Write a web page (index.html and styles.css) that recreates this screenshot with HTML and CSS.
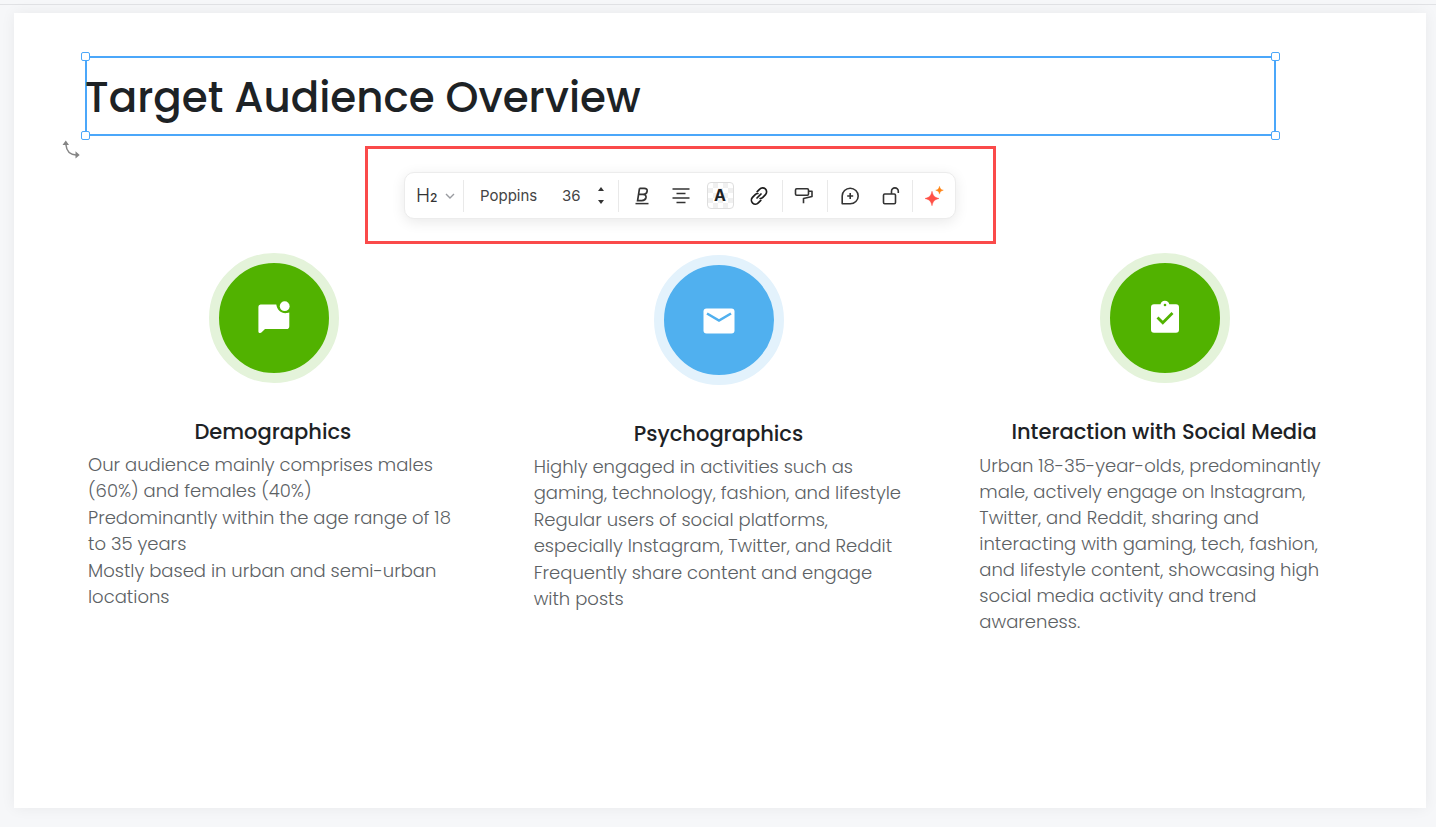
FILE: index.html
```html
<!DOCTYPE html>
<html lang="en">
<head>
<meta charset="utf-8">
<title>Target Audience Overview</title>
<link rel="stylesheet" href="styles.css">
</head>
<body>
<div class="topbar"></div>
<main class="slide">
  <section class="heading-area">
    <div class="selection">
      <h1 class="title">Target Audience Overview</h1>
      <span class="handle top-left"></span>
      <span class="handle top-right"></span>
      <span class="handle bottom-left"></span>
      <span class="handle bottom-right"></span>
      <svg class="rotate" width="20" height="20" viewBox="0 0 20 20" aria-hidden="true"><path d="M5 5C5.500 11 9 14.500 15 15" fill="none" stroke="#858585" stroke-width="1.500"/><path d="M1.500 5 4.800.5 8 5Z M14.500 11.300 18.700 15 14.500 18.500Z" fill="#858585"/></svg>
    </div>
    <div class="callout">
      <div class="toolbar" role="toolbar" aria-label="Text formatting">
        <div class="group g-style">
          <button class="style-btn" aria-label="Heading 2"><span>H<span class="level">2</span></span>
            <svg width="10" height="6" viewBox="0 0 10 6"><path d="M1 1l4 4 4-4" fill="none" stroke="#999ba0" stroke-width="1.400"/></svg></button>
        </div>
        <div class="group g-font">
          <select class="font-select" aria-label="Font"><option>Poppins</option></select>
          <input class="size-input" type="text" value="36" aria-label="Font size">
          <div class="stepper">
            <button aria-label="Increase size"><svg width="6" height="4" viewBox="0 0 6 4"><path d="M3 0l3 4H0z" fill="#333"/></svg></button>
            <button aria-label="Decrease size"><svg width="6" height="4" viewBox="0 0 6 4"><path d="M0 0h6L3 4z" fill="#333"/></svg></button>
          </div>
        </div>
        <div class="group g-text">
          <button class="icon" aria-label="Bold, italic, underline"><svg width="20" height="20" viewBox="0 0 20 20"><path d="M7.500 2.300h4.700c2.200 0 3.300 1.200 2.900 3-.3 2-1.800 3.100-3.900 3.100H6.600M11 8.400c2.200 0 3.300 1.300 3 3.100-.4 2-2 3.100-4.200 3.100H5.600l1.900-12.300" fill="none" stroke="#333" stroke-width="1.700"/><path d="M3.500 17.600h13" stroke="#333" stroke-width="1.500"/></svg></button>
          <button class="icon" aria-label="Align center"><svg width="20" height="20" viewBox="0 0 20 20"><path d="M1.500 3h17M5.500 7.500h9M1.500 12h17M5.500 16.500h9" stroke="#333" stroke-width="1.500"/></svg></button>
          <button class="icon" aria-label="Text colour"><span class="swatch">A</span></button>
          <button class="icon" aria-label="Link"><svg width="20" height="20" viewBox="0 0 20 20"><g fill="none" stroke="#1d1d1d" stroke-width="1.700" stroke-linecap="round"><path d="M8.200 5.600l2.500-2.500a3.700 3.700 0 0 1 5.800 5.500l-2.700 2.800a3.700 3.700 0 0 1-2.700 1.100"/><path d="M11.800 14.400l-2.500 2.500a3.700 3.700 0 0 1-5.800-5.500l2.700-2.800a3.700 3.700 0 0 1 2.700-1.100"/><path d="M8 12l4-4"/></g></svg></button>
        </div>
        <div class="group g-paint">
          <button class="icon" aria-label="Format painter"><svg width="20" height="20" viewBox="0 0 20 20"><g fill="none" stroke="#333" stroke-width="1.600" stroke-linejoin="round"><rect x="1.500" y="2.800" width="13" height="6.400" rx="1.200"/><path d="M14.500 5.200H18v5.300l-8.500 2V17.200"/></g></svg></button>
        </div>
        <div class="group g-notes">
          <button class="icon" aria-label="Comment"><svg width="20" height="20" viewBox="0 0 20 20"><path d="M2.200 17.800V10a8 7.800 0 1 1 8 7.800zM10.200 7v6M7.200 10h6" fill="none" stroke="#333" stroke-width="1.600" stroke-linejoin="round"/></svg></button>
          <button class="icon" aria-label="Lock"><svg width="20" height="20" viewBox="0 0 20 20"><g fill="none" stroke="#333" stroke-width="1.600"><rect x="2.500" y="8" width="12" height="9.800" rx="1.200"/><path d="M10.500 8V5.300a3.400 3.400 0 0 1 6.800 0V7"/></g></svg></button>
        </div>
        <div class="group g-ai">
          <button class="icon" aria-label="AI assistant"><svg width="20" height="20" viewBox="0 0 20 20"><path d="M8 5.300c1 4.600 2.700 6.200 7 7.200-4.300 1-6 2.600-7 7.200-1-4.600-2.700-6.200-7-7.200 4.300-1 6-2.600 7-7.200z" fill="#ff5046" stroke="#ff5046" stroke-width=".5"/><path d="M15.500.3c.6 2.500 1.400 3.300 3.800 3.900-2.400.6-3.200 1.400-3.800 3.900-.6-2.500-1.400-3.300-3.800-3.900 2.400-.6 3.200-1.400 3.800-3.900z" fill="#ff8413" stroke="#ff8413" stroke-width=".4"/></svg></button>
        </div>
      </div>
    </div>
  </section>

  <section class="columns">
    <article class="card">
      <div class="badge green"><svg width="40" height="40" viewBox="0 0 40 40"><path d="M6.500 6.500h15.800c.8 5.600 5 9.400 10.700 8.600l2.300-.7v13.800a2.800 2.800 0 0 1-2.800 2.800H11l-3.600 3.600c-1 1-3 .4-3-1.200V8.800a2.300 2.300 0 0 1 2.100-2.300z" fill="#fff"/><circle cx="30.700" cy="8.200" r="4.900" fill="#fff"/></svg></div>
      <h2>Demographics</h2>
      <p>Our audience mainly comprises males<br>(60%) and females (40%)</p>
      <p>Predominantly within the age range of 18<br>to 35 years</p>
      <p>Mostly based in urban and semi-urban<br>locations</p>
    </article>
    <article class="card lowered">
      <div class="badge blue"><svg width="40" height="40" viewBox="0 0 40 40"><rect x="4.500" y="8.500" width="31" height="25" rx="3" fill="#fff"/><path d="M8 13.500l12 7 12-7" fill="none" stroke="#50b0ef" stroke-width="2.600"/></svg></div>
      <h2>Psychographics</h2>
      <p>Highly engaged in activities such as<br>gaming, technology, fashion, and lifestyle</p>
      <p>Regular users of social platforms,<br>especially Instagram, Twitter, and Reddit</p>
      <p>Frequently share content and engage<br>with posts</p>
    </article>
    <article class="card">
      <div class="badge green"><svg width="40" height="40" viewBox="0 0 40 40"><path d="M9 6.300h6.500a4.500 4.500 0 0 1 8.800 0H31a3 3 0 0 1 3 3v22.400a3 3 0 0 1-3 3H9a3 3 0 0 1-3-3V9.300a3 3 0 0 1 3-3z" fill="#fff"/><circle cx="20" cy="7" r="1.300" fill="#51b200"/><path d="M12.500 19.500l5.300 5.300 9.700-9.700" fill="none" stroke="#51b200" stroke-width="2.800"/></svg></div>
      <h2>Interaction with Social Media</h2>
      <p class="single">Urban 18-35-year-olds, predominantly<br>male, actively engage on Instagram,<br>Twitter, and Reddit, sharing and<br>interacting with gaming, tech, fashion,<br>and lifestyle content, showcasing high<br>social media activity and trend<br>awareness.</p>
    </article>
  </section>
</main>
</body>
</html>
```
FILE: styles.css
```css
* { box-sizing: border-box; }
body {
  margin: 0;
  min-height: 100vh;
  display: flex;
  flex-direction: column;
  background: #f6f7f9;
  font-family: Poppins, Inter, sans-serif;
}
button, input, select { font: inherit; color: inherit; border: 0; background: none; padding: 0; margin: 0; }
svg { display: block; }
.topbar { height: 5px; border-bottom: 1px solid #e1e2e5; }
.slide {
  flex: 1;
  margin: 8px 10px 19px 14px;
  padding: 43px 75px 40px 71px;
  background: #fff;
  box-shadow: 0 0 14px rgba(0, 0, 0, .06);
}
.heading-area { margin-right: 75px; display: flex; flex-direction: column; align-items: center; }
.selection {
  position: relative;
  width: 100%;
  height: 80px;
  display: flex;
  align-items: center;
  border: 2px solid #4ba7fa;
}
.title { margin: 0 0 0 -2px; padding-top: 4px; font-size: 42px; font-weight: 500; line-height: 60px; color: #1d2225; white-space: nowrap; }
.handle { position: absolute; width: 9px; height: 9px; background: #fff; border: 1px solid #4ba7fa; border-radius: 2px; }
.top-left { top: -6px; left: -6px; }
.top-right { top: -6px; right: -6px; }
.bottom-left { bottom: -6px; left: -6px; }
.bottom-right { bottom: -6px; right: -6px; }
.rotate { position: absolute; left: -26px; top: 82px; }
.callout { margin-top: 10px; padding: 23px 37px 22px 36px; border: 3px solid #fa4a4a; }
.toolbar {
  display: flex;
  align-items: center;
  height: 47px;
  background: #fff;
  border: 1px solid #ececec;
  border-radius: 10px;
  box-shadow: 0 3px 14px rgba(0, 0, 0, .09);
  color: #333;
  font-family: Inter, sans-serif;
  font-size: 15px;
}
.group { display: flex; align-items: center; height: 32px; }
.group + .group { border-left: 1px solid #e9e9e9; }
.g-style { width: 58px; padding-left: 11px; }
.style-btn { display: flex; align-items: center; gap: 8px; font-size: 19px; font-weight: 300; }
.level { font-size: 12px; font-weight: 500; }
.g-font { width: 155px; padding-left: 16px; }
.font-select { appearance: none; width: 82px; font-weight: 400; color: #444; }
.size-input { width: 36px; color: #444; }
.stepper { display: flex; flex-direction: column; gap: 9px; }
.stepper button { display: block; height: 4px; }
.g-text { width: 164px; padding-left: 13px; gap: 19px; }
.icon { display: flex; align-items: center; justify-content: center; width: 20px; height: 28px; }
.g-paint { width: 45px; padding-left: 11px; }
.g-notes { width: 85px; padding-left: 12px; gap: 21px; }
.g-ai { width: 43px; padding-left: 11px; }
.swatch {
  flex: none;
  width: 27px;
  height: 27px;
  border: 1px solid #dedede;
  border-radius: 4px;
  background: repeating-conic-gradient(#f0f0f0 0 25%, #fff 0 50%) 0 0 / 10px 10px;
  font-size: 16px;
  font-weight: 700;
  line-height: 25px;
  color: #1d2225;
  text-align: center;
}
.columns {
  display: grid;
  grid-template-columns: repeat(3, 1fr);
  gap: 74px;
  margin: 9px 0 0 3px;
}
.card { display: flex; flex-direction: column; color: #5c6164; }
.lowered { padding-top: 2px; }
.badge {
  align-self: center;
  display: flex;
  align-items: center;
  justify-content: center;
  width: 130px;
  height: 130px;
  border-radius: 50%;
  border: 10px solid;
}
.green { background: #51b200; border-color: #e4f3da; }
.blue { background: #50b0ef; border-color: #e3f2fc; }
.card h2 { margin: 34px 2px 5px 0; font-size: 21px; font-weight: 500; line-height: 30px; color: #1d2225; text-align: center; white-space: nowrap; }
.card p { margin: 0 0 1px; font-size: 18px; font-weight: 300; line-height: 26px; white-space: nowrap; }
.card .single { padding-top: 1px; }
```
